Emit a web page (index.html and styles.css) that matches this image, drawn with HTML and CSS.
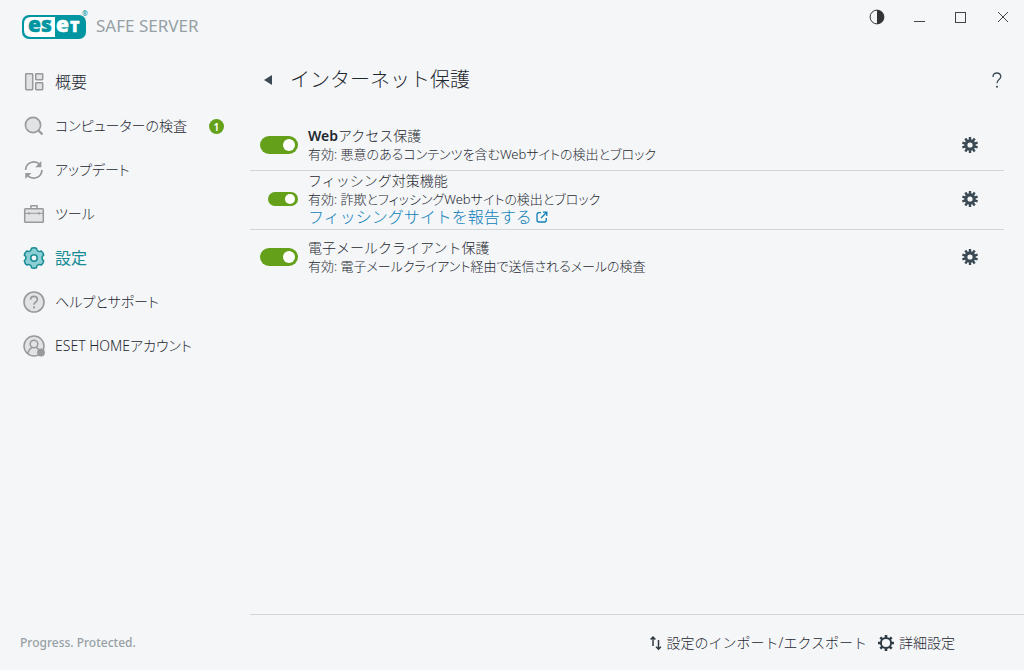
FILE: index.html
```html
<!DOCTYPE html>
<html lang="ja">
<head>
<meta charset="utf-8">
<meta name="viewport" content="width=device-width, initial-scale=1">
<title>ESET Safe Server</title>
<link rel="stylesheet" href="styles.css">
</head>
<body>
<svg class="defs" aria-hidden="true">
  <symbol id="gear" viewBox="0 0 16 16">
    <g fill="currentColor">
      <g id="teeth">
        <rect x="6.8" y="0" width="2.4" height="16"/>
        <rect x="6.8" y="0" width="2.4" height="16" transform="rotate(36 8 8)"/>
        <rect x="6.8" y="0" width="2.4" height="16" transform="rotate(72 8 8)"/>
        <rect x="6.8" y="0" width="2.4" height="16" transform="rotate(108 8 8)"/>
        <rect x="6.8" y="0" width="2.4" height="16" transform="rotate(144 8 8)"/>
      </g>
      <circle cx="8" cy="8" r="5.7"/>
    </g>
    <circle cx="8" cy="8" r="2.6" fill="#f4f6f8"/>
  </symbol>
</svg>
<div class="app">
  <aside class="sidebar">
    <div class="brand">
      <svg class="logo" viewBox="0 0 68 32" role="img" aria-label="ESET">
        <rect x="0" y="5" width="64" height="24" rx="7" fill="#0096a1"/>
        <path d="M33 7H9Q2 7 2 14V20Q2 27 9 27H33Z" fill="#fff"/>
        <text class="logo-text" x="6" y="22" fill="#0096a1" stroke="#0096a1">es</text>
        <text class="logo-text" x="34" y="22" fill="#fff" stroke="#fff">e</text>
        <text class="logo-text logo-cap" x="48" y="22" fill="#fff" stroke="#fff">T</text>
        <text class="logo-mark" x="60" y="6" fill="#0096a1">®</text>
      </svg>
      <span class="product">SAFE SERVER</span>
    </div>
    <nav class="nav">
      <a class="nav-item short" href="#">
        <svg viewBox="0 0 22 22"><g fill="#e1e3e5" stroke="#97999b" stroke-width="1.5"><rect x="2.7" y="2.7" width="7" height="16" rx=".6"/><rect x="12.7" y="2.7" width="7" height="6" rx=".6"/><rect x="12.7" y="11.7" width="7" height="7" rx=".6"/></g></svg>
        <span>概要</span>
      </a>
      <a class="nav-item" href="#">
        <svg viewBox="0 0 22 22"><g stroke="#97999b" stroke-width="1.6"><circle cx="10" cy="10" r="7.6" fill="#e1e3e5"/><path d="M15.6 15.6L19.5 19.5" stroke-width="2.2"/></g></svg>
        <span>コンピューターの検査</span><span class="badge">1</span>
      </a>
      <a class="nav-item" href="#">
        <svg viewBox="0 0 22 22"><g fill="none" stroke="#97999b" stroke-width="1.7"><path d="M2.6 11A8.2 8.2 0 0 1 16.8 5.6"/><path d="M18.9 11A8.2 8.2 0 0 1 4.8 16.6"/></g><path d="M18.3 2V8.2H12.2ZM2.3 20V14H8.4Z" fill="#97999b"/></svg>
        <span>アップデート</span>
      </a>
      <a class="nav-item" href="#">
        <svg viewBox="0 0 22 22"><g fill="#e1e3e5" stroke="#97999b" stroke-width="1.5"><path d="M8 5.5V2.700H14V5.500" fill="none"/><rect x="1.7" y="5.7" width="18.6" height="13.6" rx=".8"/><path d="M2 10.300H20" stroke-width="1"/><path d="M6 9.200V11.600M16 9.200V11.600" stroke-width="1.5"/></g></svg>
        <span>ツール</span>
      </a>
      <a class="nav-item short active" href="#" aria-current="page">
        <svg viewBox="0 0 22 22"><g stroke="#168b93" stroke-width="1.5"><path d="M8.6 1.200Q11 .3 13.400 1.200Q13.700 3.500 15 4.100Q16.200 4.700 18.300 4Q20.200 5.600 20.700 8.200Q19 9.500 19 11T20.700 13.800Q20.200 16.400 18.300 18Q16.200 17.300 15 17.900Q13.700 18.500 13.400 20.800Q11 21.700 8.600 20.800Q8.300 18.500 7 17.900Q5.800 17.300 3.700 18Q1.800 16.400 1.300 13.800Q3 12.500 3 11T1.300 8.200Q1.800 5.600 3.700 4Q5.800 4.700 7 4.100Q8.300 3.500 8.600 1.200Z" fill="#8bcfd5" stroke-linejoin="round"/><circle cx="11" cy="11" r="3.2" fill="#f4f6f8"/></g></svg>
        <span>設定</span>
      </a>
      <a class="nav-item" href="#">
        <svg viewBox="0 0 22 22"><g fill="none" stroke="#97999b" stroke-width="1.6"><circle cx="11" cy="11" r="10" fill="#e1e3e5"/><path d="M7.6 8.7Q7.7 5.4 11 5.400T14.400 8.500Q14.400 10 12.800 11Q11 12 11 13.800"/></g><circle cx="11" cy="16.4" r="1.1" fill="#97999b"/></svg>
        <span>ヘルプとサポート</span>
      </a>
      <a class="nav-item" href="#">
        <svg viewBox="0 0 22 22"><g fill="#e1e3e5" stroke="#97999b" stroke-width="1.5"><circle cx="11" cy="11" r="10"/><circle cx="11" cy="9" r="3.8"/><path d="M4.600 18.200Q5.600 14.400 8.800 12.300M13.200 12.300Q15 13.300 16 15" fill="none"/></g><circle cx="18" cy="17.5" r="3.9" fill="#97999b"/></svg>
        <span>ESET HOMEアカウント</span>
      </a>
    </nav>
    <p class="tagline">Progress. Protected.</p>
  </aside>

  <main class="main">
    <div class="window-bar">
      <button type="button" aria-label="コントラスト"><svg viewBox="0 0 16 16"><circle cx="8" cy="8" r="6.9" fill="none" stroke="#333" stroke-width="1"/><path d="M8 1A7 7 0 0 1 8 15Z" fill="#333"/></svg></button>
      <button type="button" aria-label="最小化"><svg viewBox="0 0 16 16"><path d="M3 12.500H14" stroke="#444"/></svg></button>
      <button type="button" aria-label="最大化"><svg viewBox="0 0 16 16"><rect x="2.5" y="3.5" width="10" height="10" fill="none" stroke="#444"/></svg></button>
      <button type="button" aria-label="閉じる"><svg viewBox="0 0 16 16"><path d="M3 3L13 13M13 3L3 13" stroke="#444"/></svg></button>
    </div>
    <header class="page-head">
      <button class="back" type="button" aria-label="戻る"><svg viewBox="0 0 8 12"><path d="M8 1V11L0 6Z" fill="#3b4a54"/></svg></button>
      <h1>インターネット保護</h1>
      <button class="help" type="button" aria-label="ヘルプ"><svg viewBox="0 0 10 16"><path d="M1.100 5V4Q1.400 1 4.900 1T8.800 4.400Q8.800 6 7 7.400T5 11.300" fill="none" stroke="#3b4a54" stroke-width="1.3"/><circle cx="5" cy="14.7" r="1" fill="#3b4a54"/></svg></button>
    </header>

    <ul class="settings">
      <li class="row">
        <div class="switch"><input type="checkbox" id="web" checked></div>
        <div class="text"><label for="web"><b>Web</b>アクセス保護</label><p>有効: 悪意のあるコンテンツを含むWebサイトの検出とブロック</p></div>
        <button class="gear" type="button" aria-label="Webアクセス保護の設定"><svg><use href="#gear"/></svg></button>
      </li>
      <li class="row tight">
        <div class="switch"><input class="small" type="checkbox" id="phish" checked></div>
        <div class="text"><label for="phish">フィッシング対策機能</label><p>有効: 詐欺とフィッシングWebサイトの検出とブロック</p>
          <a class="report" href="#">フィッシングサイトを報告する<svg viewBox="0 0 12 12"><g fill="none" stroke="currentColor" stroke-width="1.3"><path d="M5 1.700H3Q1 1.700 1 3.700V9Q1 11 3 11H8.300Q10.300 11 10.300 9V7"/><path d="M5 7L10.500 1.500M7 1.200H10.800V5"/></g></svg></a></div>
        <button class="gear" type="button" aria-label="フィッシング対策機能の設定"><svg><use href="#gear"/></svg></button>
      </li>
      <li class="row last">
        <div class="switch"><input type="checkbox" id="mail" checked></div>
        <div class="text"><label for="mail">電子メールクライアント保護</label><p>有効: 電子メールクライアント経由で送信されるメールの検査</p></div>
        <button class="gear" type="button" aria-label="電子メールクライアント保護の設定"><svg><use href="#gear"/></svg></button>
      </li>
    </ul>

    <footer class="actions">
      <button type="button"><svg class="swap" viewBox="0 0 12 16"><g fill="none" stroke="#2f3b44" stroke-width="1.5"><path d="M3 11V2M.6 4.500L3 2L5.400 4.500M8.500 5V14.200M6.100 11.700L8.500 14.200L10.900 11.700"/></g></svg>設定のインポート/エクスポート</button>
      <button type="button"><svg class="cog" viewBox="0 0 16 16"><g stroke="#2f3b44" fill="none"><circle cx="8" cy="8" r="5.1" stroke-width="2"/><path d="M8 0V3M8 13V16M0 8H3M13 8H16M2.300 2.300L4.400 4.400M11.600 11.600L13.700 13.700M2.300 13.700L4.400 11.600M11.600 4.400L13.700 2.300" stroke-width="2.6"/></g></svg>詳細設定</button>
    </footer>
  </main>
</div>
</body>
</html>
```

FILE: styles.css
```css
* { box-sizing: border-box; }

body {
  margin: 0;
  background: #f4f6f8;
  color: #1f2830;
  font: 300 14px/18px "Noto Sans", "Noto Sans CJK JP", sans-serif;
}

h1, p, ul { margin: 0; padding: 0; font-weight: inherit; }
svg { display: block; flex: none; }
a { text-decoration: none; }

button {
  display: flex;
  align-items: center;
  justify-content: center;
  padding: 0;
  border: 0;
  background: none;
  color: inherit;
  font: inherit;
  cursor: pointer;
}

.defs { display: none; }

.app {
  display: grid;
  grid-template-columns: 250px 1fr;
  min-height: 100vh;
}

/* Sidebar */
.sidebar { display: flex; flex-direction: column; }

.brand {
  display: flex;
  align-items: center;
  gap: 6px;
  height: 60px;
  padding: 0 0 8px 22px;
}

.logo { width: 68px; height: 32px; }
.logo-text { font: 800 21px "Open Sans", sans-serif; stroke-width: 0.5px; }
.logo-cap { font-size: 16px; }
.logo-mark { font: 700 7px "Open Sans", sans-serif; }

.product { color: #97a0a5; font-size: 17px; font-weight: 400; }

.nav { flex: 1; }

.nav-item {
  display: flex;
  align-items: center;
  gap: 10px;
  height: 44px;
  padding: 0 26px 0 23px;
  color: #1f2830;
  font-size: 14px;
  font-feature-settings: "palt";
  white-space: nowrap;
}

.nav-item.short { font-size: 16px; }
.nav-item svg { width: 22px; height: 22px; }
.nav-item.active { color: #168b93; font-weight: 400; }

.badge {
  width: 15px;
  height: 15px;
  margin-left: auto;
  border-radius: 50%;
  background: #64a019;
  color: #fff;
  font-size: 11px;
  font-weight: 600;
  line-height: 15px;
  text-align: center;
}

.tagline {
  padding: 0 20px 18px;
  color: #97a0a5;
  font-size: 12px;
  font-weight: 500;
}

/* Main area */
.main { display: flex; flex-direction: column; min-width: 0; }

.window-bar { display: flex; justify-content: flex-end; height: 34px; }
.window-bar button { width: 42px; }
.window-bar svg { width: 16px; height: 16px; }

.page-head {
  display: flex;
  align-items: center;
  height: 40px;
  margin-top: 26px;
  padding: 0 22px 0 14px;
}

.back svg { width: 8px; height: 12px; }
.page-head h1 { flex: 1; margin-left: 18px; font-size: 20px; line-height: 20px; }
.help svg { width: 10px; height: 16px; }

.settings { flex: 1; margin: 20px 20px 0 0; list-style: none; }

.row {
  display: grid;
  grid-template-columns: 48px 1fr 16px;
  align-items: center;
  column-gap: 10px;
  padding: 7px 26px 7px 0;
  border-bottom: 1px solid #d3d6d9;
}

.row.tight { padding-top: 1px; padding-bottom: 3px; }
.row.last { padding-top: 9px; border-bottom: 0; }

.switch { display: flex; justify-content: flex-end; }

.switch input {
  display: flex;
  align-items: center;
  justify-content: flex-end;
  width: 38px;
  height: 18px;
  margin: 0;
  padding: 0 3px;
  border-radius: 9px;
  appearance: none;
  background: #64a019;
}

.switch input::before {
  content: "";
  width: 12px;
  height: 12px;
  border-radius: 50%;
  background: #fff;
}

.switch input:not(:checked) { justify-content: flex-start; background: #97a0a5; }
.switch input.small { width: 30px; height: 14px; }
.switch input.small::before { width: 10px; height: 10px; }

.text label { display: block; }
.text b { font-weight: 600; }
.text p { font-size: 13px; font-feature-settings: "palt"; }

.report {
  display: flex;
  align-items: center;
  gap: 4px;
  color: #0f7fb8;
  font-size: 16px;
  line-height: 18px;
}

.report svg { width: 12px; height: 12px; }

.gear { color: #3b4a54; }
.gear svg { width: 16px; height: 16px; }

.actions {
  display: flex;
  justify-content: flex-end;
  align-items: center;
  gap: 11px;
  height: 56px;
  padding-right: 69px;
  border-top: 1px solid #d3d6d9;
}

.actions button { gap: 5px; }
.swap { width: 12px; height: 16px; }
.cog { width: 16px; height: 16px; }
```
